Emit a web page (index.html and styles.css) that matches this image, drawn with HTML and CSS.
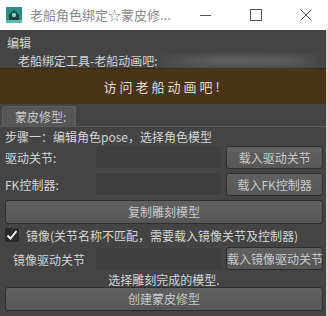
FILE: index.html
```html
<!DOCTYPE html>
<html>
<head>
    <meta http-equiv="Content-Type" content="text/html; charset=utf-8" />
    <title>老船角色绑定</title>
    <link rel="stylesheet" href="styles.css">
</head>
<body>

<!--标题栏-->
<div class="titlebar">
    <span class="titlebar-icon">
        <svg width="16" height="16" viewBox="0 0 16 16">
            <rect x="0" y="0" width="16" height="16" fill="#2a8f86"/>
            <path d="M3 14 L3 8 L8 3 L13 8 L13 14 Z" fill="#1f3f3f"/>
            <circle cx="8" cy="8" r="2.2" fill="#7fd3c6"/>
            <rect x="0" y="13" width="16" height="3" fill="#5fb8ad"/>
        </svg>
    </span>
    <span class="titlebar-text">老船角色绑定☆蒙皮修...</span>
    <span class="titlebar-buttons">
        <svg width="12" height="12" viewBox="0 0 12 12"><path d="M0 6.5 H11" stroke="#555" stroke-width="1"/></svg>
        <svg width="12" height="12" viewBox="0 0 12 12"><rect x="0.5" y="0.5" width="11" height="11" fill="none" stroke="#555" stroke-width="1"/></svg>
        <svg width="12" height="12" viewBox="0 0 12 12"><path d="M0.5 0.5 L11.5 11.5 M11.5 0.5 L0.5 11.5" stroke="#555" stroke-width="1"/></svg>
    </span>
</div>

<div class="window">
    <div class="menu">编辑</div>
    <div class="credit">
        <span>老船绑定工具-老船动画吧:</span>
        <span class="credit-blur"></span>
    </div>
    <div class="banner">访问老船动画吧!</div>

    <div class="tabs">
        <span class="tab">蒙皮修型:</span>
    </div>

    <div class="panel">
        <div class="step">步骤一：编辑角色pose，选择角色模型</div>

        <div class="row">
            <span class="row-label">驱动关节:</span>
            <span class="field"></span>
            <a href="#" class="btn btn-side">载入驱动关节</a>
        </div>
        <div class="row row-fk">
            <span class="row-label">FK控制器:</span>
            <span class="field"></span>
            <a href="#" class="btn btn-side">载入FK控制器</a>
        </div>

        <a href="#" class="btn btn-wide btn-copy">复制雕刻模型</a>

        <div class="check-row">
            <span class="check">
                <svg width="14" height="14" viewBox="0 0 14 14"><path d="M2.5 7.5 L5.5 10.5 L11.5 3" fill="none" stroke="#f0f0f0" stroke-width="2"/></svg>
            </span>
            <span>镜像(关节名称不匹配，需要载入镜像关节及控制器)</span>
        </div>

        <div class="row row-mirror">
            <span class="row-label">镜像驱动关节</span>
            <span class="field"></span>
            <a href="#" class="btn btn-side">载入镜像驱动关节</a>
        </div>

        <div class="hint">选择雕刻完成的模型.</div>
        <a href="#" class="btn btn-wide">创建蒙皮修型</a>
    </div>
</div>

</body>
</html>
```

FILE: styles.css
```css
body{
    padding: 0px;margin: 0px;width: 328px;height: 316px;overflow: hidden;
    font-size: 12px;font-family: "Noto Sans CJK SC", "Liberation Sans", sans-serif;
    background: #444;
}

/*标题栏*/
.titlebar{
    height: 30px;background: #fff;
    display: flex;align-items: center;
    padding-left: 6px;
}
.titlebar-icon{width: 16px;height: 16px;display: block;}
.titlebar-icon svg{display: block;}
.titlebar-text{
    margin-left: 8px;font-size: 13px;color: #888;line-height: 30px;
    flex: 1;
}
.titlebar-buttons{
    display: flex;gap: 38px;padding-right: 16px;
}
.titlebar-buttons svg{display: block;}

/*主窗口*/
.window{
    background: #444;color: #d4d4d4;
    height: 286px;
    border-right: 2px solid #d8d8d8;
}
.window a{text-decoration: none;}

.menu{
    height: 22px;line-height: 22px;padding-left: 7px;padding-top: 2px;
}
.credit{
    display: flex;align-items: center;
    height: 14px;line-height: 14px;padding-left: 18px;
}
.credit-blur{
    flex: 1;height: 12px;margin: 0 8px 0 2px;
    background: linear-gradient(90deg, #4a4a4a, #5e5e5e 40%, #5a5a5a 80%, #4a4a4a);
    filter: blur(2px);
}

/*横幅*/
.banner{
    height: 35px;line-height: 35px;
    background: #4b3318;color: #e0dcd6;
    text-align: center;font-size: 13px;letter-spacing: 3px;
    border-top: 1px solid #3a2812;
}

/*标签页*/
.tabs{
    padding: 2px 0 0 2px;height: 20px;
}
.tab{
    display: block;width: 74px;height: 20px;line-height: 20px;
    background: #565656;color: #c8c8c8;
    border: 1px solid #5f5f5f;border-bottom: none;border-radius: 2px 2px 0 0;
    padding-left: 12px;box-sizing: border-box;
}

.panel{
    border-top: 1px solid #5b5b5b;
    padding: 0 3px 0 5px;
}
.step{
    height: 16px;line-height: 16px;padding-top: 2px;
}

/*每行*/
.row{
    display: flex;align-items: center;height: 24px;
}
.row-fk{margin-top: 3px;}
.row-label{width: 90px;white-space: nowrap;}
.field{
    width: 128px;height: 24px;background: #3f3f3f;
    border: 1px solid #474747;box-sizing: border-box;
}
.btn{
    display: block;background: linear-gradient(#606060, #575757);color: #c9c9c9;
    border: 1px solid #2e2e2e;border-radius: 3px;text-align: center;
    box-sizing: border-box;white-space: nowrap;
}
.btn-side{
    width: 97px;height: 23px;line-height: 21px;margin-left: 4px;
}
.btn-wide{
    height: 24px;line-height: 22px;
}
.btn-copy{margin-top: 4px;}

.check-row{
    display: flex;align-items: center;gap: 7px;height: 14px;margin-top: 4px;
}
.check{
    width: 14px;height: 14px;background: #2b2b2b;display: block;
}
.check svg{display: block;}

.row-mirror{margin-top: 5px;}
.row-mirror .row-label{padding-left: 8px;width: 82px;}
.row-mirror .btn-side{margin-left: 3px;align-self: flex-start;}

.hint{
    text-align: center;height: 14px;line-height: 14px;margin-top: 2px;
}
```
